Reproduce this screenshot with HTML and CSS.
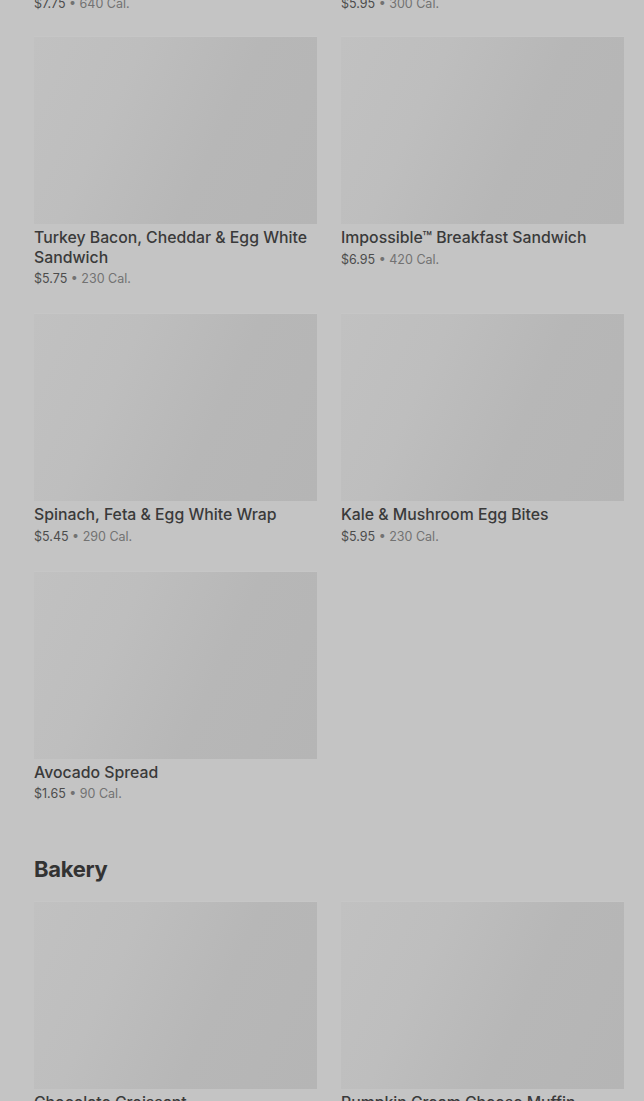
FILE: index.html
```html
<!DOCTYPE html>
<html lang="en">
<head>
<meta charset="utf-8">
<title>Menu</title>
<link rel="stylesheet" href="styles.css">
</head>
<body>
<main class="page">
  <div class="grid top-grid">
    <div class="card tail">
      <p class="meta"><span class="price">$7.75</span> <span class="cal">• 640 Cal.</span></p>
    </div>
    <div class="card tail">
      <p class="meta"><span class="price">$5.95</span> <span class="cal">• 300 Cal.</span></p>
    </div>
  </div>

  <div class="grid">
    <div class="card">
      <div class="thumb"></div>
      <h3 class="name">Turkey Bacon, Cheddar &amp; Egg White Sandwich</h3>
      <p class="meta"><span class="price">$5.75</span> <span class="cal">• 230 Cal.</span></p>
    </div>
    <div class="card">
      <div class="thumb"></div>
      <h3 class="name">Impossible™ Breakfast Sandwich</h3>
      <p class="meta"><span class="price">$6.95</span> <span class="cal">• 420 Cal.</span></p>
    </div>
    <div class="card">
      <div class="thumb"></div>
      <h3 class="name">Spinach, Feta &amp; Egg White Wrap</h3>
      <p class="meta"><span class="price">$5.45</span> <span class="cal">• 290 Cal.</span></p>
    </div>
    <div class="card">
      <div class="thumb"></div>
      <h3 class="name">Kale &amp; Mushroom Egg Bites</h3>
      <p class="meta"><span class="price">$5.95</span> <span class="cal">• 230 Cal.</span></p>
    </div>
    <div class="card">
      <div class="thumb"></div>
      <h3 class="name">Avocado Spread</h3>
      <p class="meta"><span class="price">$1.65</span> <span class="cal">• 90 Cal.</span></p>
    </div>
  </div>

  <section class="section">
    <h2 class="section-title">Bakery</h2>
    <div class="grid">
      <div class="card">
        <div class="thumb"></div>
        <h3 class="name">Chocolate Croissant</h3>
        <p class="meta"><span class="price">$3.95</span> <span class="cal">• 300 Cal.</span></p>
      </div>
      <div class="card">
        <div class="thumb"></div>
        <h3 class="name">Pumpkin Cream Cheese Muffin</h3>
        <p class="meta"><span class="price">$3.75</span> <span class="cal">• 350 Cal.</span></p>
      </div>
    </div>
  </section>
</main>
</body>
</html>
```

FILE: styles.css
```css
html, body {
  margin: 0;
  padding: 0;
  background: #c4c4c4;
  overflow: hidden;
}

body {
  font-family: Inter, "Liberation Sans", sans-serif;
  color: #3b3b3b;
}

.page {
  padding: 0 20px 0 34px;
  margin-top: -5px;
}

.grid {
  display: grid;
  grid-template-columns: 283px 283px;
  column-gap: 24px;
  row-gap: 25px;
}

.top-grid {
  margin-bottom: 23px;
}

.card {
  display: flex;
  flex-direction: column;
}

.thumb {
  height: 188px;
  background: linear-gradient(115deg, #c1c1c1 0%, #bebebe 30%, #b7b7b7 62%, #b5b5b5 100%);
  border-top: 1px solid #c6c6c6;
  box-sizing: border-box;
}

.name {
  margin: 4px 0 0;
  font-size: 15.8px;
  line-height: 19.5px;
  font-weight: 500;
  color: #3a3a3a;
}

.meta {
  margin: 3px 0 0;
  font-size: 12.5px;
  line-height: 18px;
}

.tail .meta {
  margin: 0;
}

.price {
  color: #4c4c4c;
}

.cal {
  color: #727272;
}

.section {
  margin-top: 52px;
}

.section-title {
  margin: 0 0 18px;
  font-size: 22px;
  line-height: 28px;
  font-weight: 700;
  color: #333333;
  letter-spacing: -0.3px;
}
```
